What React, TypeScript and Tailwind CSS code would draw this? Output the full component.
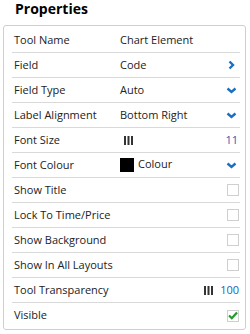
import React from "react";

type Row = {
  label: string;
  value?: React.ReactNode;
  right?: React.ReactNode;
};

function ChevronRight() {
  return (
    <svg width="7" height="10" viewBox="0 0 7 10" className="block">
      <path d="M1.5 1.5 L5 5 L1.5 8.5" fill="none" stroke="#1a6fc4" strokeWidth="2.4" />
    </svg>
  );
}

function ChevronDown() {
  return (
    <svg width="11" height="7" viewBox="0 0 11 7" className="block">
      <path d="M1.5 1.5 L5.5 5 L9.5 1.5" fill="none" stroke="#1a6fc4" strokeWidth="2.4" />
    </svg>
  );
}

function Bars() {
  return (
    <svg width="9" height="9" viewBox="0 0 9 9" className="block">
      <rect x="0" y="0" width="2" height="9" fill="#333" />
      <rect x="3.5" y="0" width="2" height="9" fill="#333" />
      <rect x="7" y="0" width="2" height="9" fill="#333" />
    </svg>
  );
}

function Checkbox({ checked }: { checked?: boolean }) {
  return (
    <div className="w-[12px] h-[12px] border border-[#cfcfcf] bg-white flex items-center justify-center">
      {checked && (
        <svg width="10" height="9" viewBox="0 0 10 9">
          <path d="M1 4.5 L3.8 7.2 L9 1.5" fill="none" stroke="#22992a" strokeWidth="2.2" />
        </svg>
      )}
    </div>
  );
}

const rows: Row[] = [
  { label: "Tool Name", value: "Chart Element" },
  { label: "Field", value: "Code", right: <div className="pr-[4px]"><ChevronRight /></div> },
  { label: "Field Type", value: "Auto", right: <div className="pr-[2px]"><ChevronDown /></div> },
  { label: "Label Alignment", value: "Bottom Right", right: <div className="pr-[2px]"><ChevronDown /></div> },
  {
    label: "Font Size",
    value: <div className="pl-[4px]"><Bars /></div>,
    right: <span className="text-[#1a5fb4] pr-[1px]">11</span>,
  },
  {
    label: "Font Colour",
    value: (
      <div className="flex items-center gap-[4px]">
        <div className="w-[14px] h-[14px] bg-black" />
        <span className="-mt-[2px]">Colour</span>
      </div>
    ),
    right: <div className="pr-[2px]"><ChevronDown /></div>,
  },
  { label: "Show Title", right: <Checkbox /> },
  { label: "Lock To Time/Price", right: <Checkbox /> },
  { label: "Show Background", right: <Checkbox /> },
  { label: "Show In All Layouts", right: <Checkbox /> },
  {
    label: "Tool Transparency",
    right: (
      <div className="flex items-center gap-[7px]">
        <Bars />
        <span className="text-[#1a5fb4]">100</span>
      </div>
    ),
  },
  { label: "Visible", right: <Checkbox checked /> },
];

export default function App() {
  return (
    <div className="w-[250px] h-[334px] bg-white font-['Open_Sans',sans-serif] text-[#222]">
      <h1 className="pl-[15px] text-[14px] font-bold leading-[18px] pt-[0px] text-black">Properties</h1>
      <div className="mt-[7px] ml-[3px] w-[243px] h-[305px] border border-[#cfcfcf] rounded-[3px] pl-[8px] pr-[5px] pt-[2px]">
        {rows.map((row, i) => (
          <div
            key={row.label}
            className={
              "flex items-center h-[25px] pl-[2px] pr-[1px] text-[11px] " +
              (i < rows.length - 1 ? "border-b border-[#d9d9d9]" : "")
            }
          >
            <div className="w-[106px] shrink-0">{row.label}</div>
            <div className="flex-1 flex items-center">{row.value}</div>
            <div className="flex items-center">{row.right}</div>
          </div>
        ))}
      </div>
    </div>
  );
}
